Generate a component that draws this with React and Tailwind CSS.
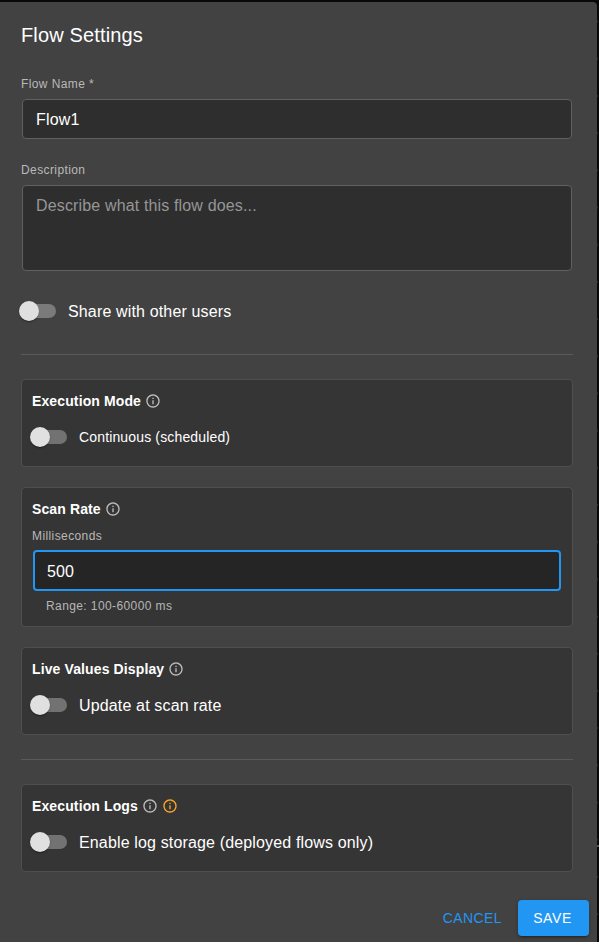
import { useState } from 'react';
import { MdInfoOutline } from 'react-icons/md';

function InfoIcon({ warning }) {
  return (
    <MdInfoOutline
      className={`size-4 shrink-0 ${warning ? 'text-[#ffa726]' : 'text-[#bdbdbd]'}`}
    />
  );
}

function Toggle({ label, small }) {
  const [checked, setChecked] = useState(false);

  return (
    <label className="flex h-6 items-center gap-3 text-white select-none">
      <input
        type="checkbox"
        className="sr-only"
        checked={checked}
        onChange={(e) => setChecked(e.target.checked)}
      />
      <span
        className={`flex h-3.5 w-[34px] items-center rounded-full ${
          checked ? 'justify-end bg-[#1d5a8c]' : 'bg-white/30'
        }`}
      >
        <span
          className={`size-5 shrink-0 rounded-full shadow-[0_2px_1px_-1px_rgba(0,0,0,0.2),0_1px_1px_0_rgba(0,0,0,0.14),0_1px_3px_0_rgba(0,0,0,0.12)] ${
            checked ? 'bg-[#2196f3]' : '-ml-[3px] bg-[#e0e0e0]'
          }`}
        ></span>
      </span>
      <span
        className={
          small
            ? 'text-sm leading-6 tracking-[0.15px]'
            : 'pt-0.5 text-base leading-6 tracking-[0.15px]'
        }
      >
        {label}
      </span>
    </label>
  );
}

function Card({ title, warning, className, children }) {
  return (
    <section
      className={`rounded-[4px] border border-[#4f4f4f] bg-[#353535] px-2.5 ${className}`}
    >
      <div className="flex h-[22px] items-center gap-1 text-white">
        <h2 className="text-sm font-bold tracking-[0.12px]">{title}</h2>
        <InfoIcon />
        {warning && <InfoIcon warning />}
      </div>
      {children}
    </section>
  );
}

export default function App() {
  const labelClass = 'block text-xs leading-5 tracking-[0.4px] text-[#b9b9b9]';
  const fieldClass =
    'ml-px block w-[550px] resize-none rounded-[4px] border border-[#606060] bg-[#2e2e2e] px-[13px] text-base tracking-[0.15px] text-white outline-none placeholder:text-[#969696]';

  return (
    <div className="relative h-[942px] w-[599px] overflow-hidden bg-[#080808] pt-0.5 font-['Liberation_Sans',Arial,sans-serif]">
      {/* canvas grid behind the dialog */}
      <div className="absolute top-[2px] right-0 h-[940px] w-[2px] bg-[radial-gradient(circle_at_0px_19.5px,#262626_0.8px,transparent_1.2px)] bg-[length:2px_37.2px]"></div>
      <div className="absolute top-[845px] right-0 h-[2px] w-[2px] bg-[#555555]"></div>

      <div className="relative h-[940px] w-[597px] rounded-tr-[4px] bg-[#424242] pt-[17px] pl-[21px]">
        <h1 className="text-xl leading-8 tracking-[0.15px] text-white">
          Flow Settings
        </h1>

        <form className="mt-[23px] w-[552px]">
          <label htmlFor="name" className={labelClass}>
            Flow Name *
          </label>
          <input
            id="name"
            type="text"
            defaultValue="Flow1"
            className={`${fieldClass} mt-[5px] h-10 pt-0.5`}
          />

          <label htmlFor="description" className={`${labelClass} mt-[21px]`}>
            Description
          </label>
          <textarea
            id="description"
            placeholder="Describe what this flow does..."
            className={`${fieldClass} mt-[5px] h-[86px] pt-2 leading-6`}
          ></textarea>

          <div className="mt-7 pl-px">
            <Toggle label="Share with other users" />
          </div>

          <hr className="mt-[31px] border-[#5a5a5a]" />

          <Card title="Execution Mode" className="mt-6 h-[88px] pt-2.5">
            <div className="mt-[13px] pl-px">
              <Toggle label="Continuous (scheduled)" small />
            </div>
          </Card>

          <Card title="Scan Rate" className="mt-5 h-[140px] pt-2.5">
            <label htmlFor="rate" className={`${labelClass} mt-1.5`}>
              Milliseconds
            </label>
            <input
              id="rate"
              type="text"
              defaultValue="500"
              className="mt-1 ml-px block h-[41px] w-[528px] rounded-[4px] border-2 border-[#2196f3] bg-[#252525] px-3 pt-0.5 text-base tracking-[0.15px] text-white outline-none"
            />
            <p className="mt-[5px] ml-3.5 text-xs leading-5 tracking-[0.4px] text-[#b5b5b5]">
              Range: 100-60000 ms
            </p>
          </Card>

          <Card title="Live Values Display" className="mt-5 h-[88px] pt-2.5">
            <div className="mt-[13px] pl-px">
              <Toggle label="Update at scan rate" />
            </div>
          </Card>

          <hr className="mt-6 border-[#5a5a5a]" />

          <Card title="Execution Logs" warning className="mt-6 h-[88px] pt-2.5">
            <div className="mt-[13px] pl-px">
              <Toggle label="Enable log storage (deployed flows only)" />
            </div>
          </Card>
        </form>

        <div className="mt-7 flex justify-end gap-2 pr-2 text-sm tracking-[0.4px]">
          <button type="button" className="h-9 px-2 text-[#2196f3]">
            CANCEL
          </button>
          <button
            type="button"
            className="h-9 w-[71px] rounded-[4px] bg-[#2196f3] pr-0.5 tracking-[0.6px] text-white shadow-[0_3px_1px_-2px_rgba(0,0,0,0.2),0_2px_2px_0_rgba(0,0,0,0.14),0_1px_5px_0_rgba(0,0,0,0.12)]"
          >
            SAVE
          </button>
        </div>
      </div>
    </div>
  );
}
